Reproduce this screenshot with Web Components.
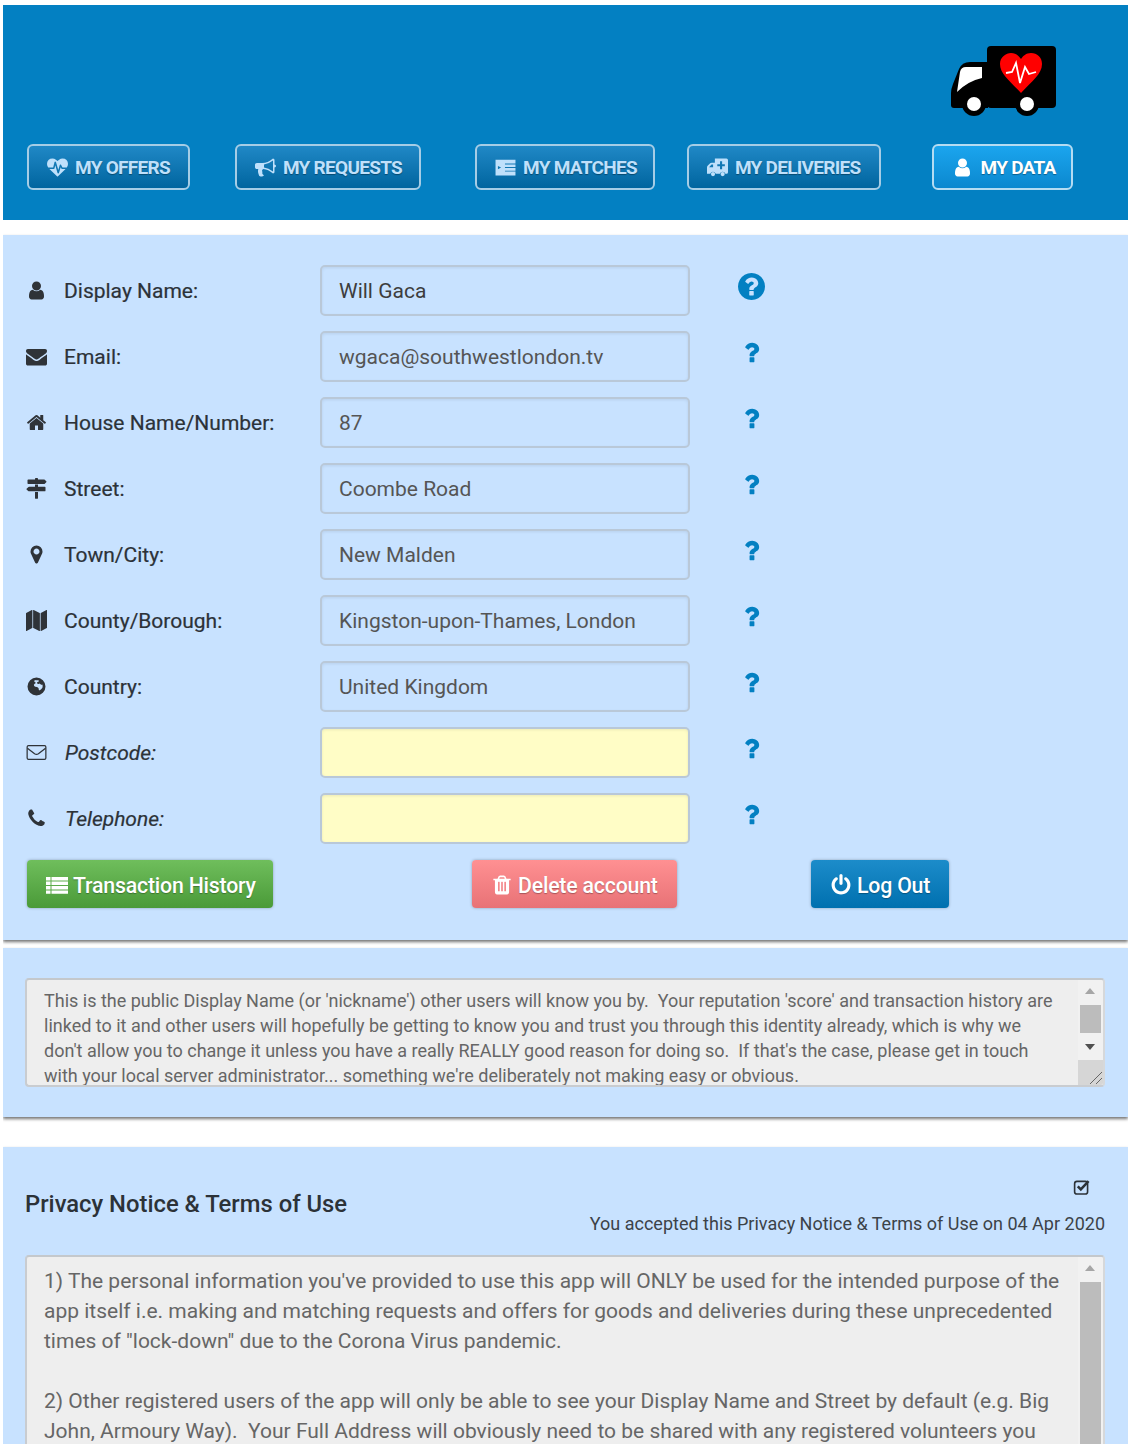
<!DOCTYPE html>
<html lang="en">
<head>
<meta charset="utf-8">
<title>My Data</title>
<style>
    html, body { height: 1444px; overflow: hidden; }
    body {
        margin: 5px 4px 0 3px;
        background: #fff;
        font-family: Roboto, "Liberation Sans", sans-serif;
        color: #2c3238;
    }
</style>
</head>
<body>

<!-- icon sprite, copied into shadow roots by app-icon -->
<template id="icon-paths">
    <svg data-name="user" viewBox="0 0 1792 1792"><path d="M1536 1399q0 109-62.5 187t-150.5 78h-854q-88 0-150.5-78t-62.5-187q0-85 8.5-160.5t31.5-152 58.5-131 94-89 134.5-34.5q131 128 313 128t313-128q76 0 134.5 34.5t94 89 58.5 131 31.5 152 8.5 160.5zm-256-887q0 159-112.5 271.5t-271.5 112.5-271.5-112.5-112.5-271.5 112.5-271.5 271.5-112.5 271.5 112.5 112.5 271.5z"/></svg>
    <svg data-name="envelope" viewBox="0 0 1792 1792"><path d="M1792 710v794q0 66-47 113t-113 47h-1472q-66 0-113-47t-47-113v-794q44 49 101 87 362 246 497 345 57 42 92.5 65.5t94.5 48 110 24.5h2q51 0 110-24.5t94.5-48 92.5-65.5q170-123 498-345 57-39 100-87zm0-294q0 79-49 151t-122 123q-376 261-468 325-10 7-42.5 30.5t-54 38-52 32.5-57.5 27-50 9h-2q-23 0-50-9t-57.5-27-52-32.5-54-38-42.5-30.5q-91-64-262-182.5t-205-142.5q-62-42-117-115.5t-55-136.5q0-78 41.5-130t118.5-52h1472q65 0 112.5 47t47.5 113z"/></svg>
    <svg data-name="home" viewBox="0 0 1792 1792"><path d="M1472 992v480q0 26-19 45t-45 19h-384v-384h-256v384h-384q-26 0-45-19t-19-45v-480q0-1 .5-3t.5-3l575-474 575 474q1 2 1 6zm223-69l-62 74q-8 9-21 11h-3q-13 0-21-7l-692-577-692 577q-12 8-24 7-13-2-21-11l-62-74q-8-10-7-23.5t11-21.5l719-599q32-26 76-26t76 26l244 204v-195q0-14 9-23t23-9h192q14 0 23 9t9 23v408l219 182q10 8 11 21.5t-7 23.5z"/></svg>
    <svg data-name="signs" viewBox="0 0 1792 1792"><path d="M1745 297q10 10 10 23t-10 23l-141 141q-28 28-68 28h-1344q-26 0-45-19t-19-45v-256q0-26 19-45t45-19h576v-64q0-26 19-45t45-19h128q26 0 45 19t19 45v64h512q40 0 68 28zm-977 907h256v512q0 26-19 45t-45 19h-128q-26 0-45-19t-19-45v-512zm832-448q26 0 45 19t19 45v256q0 26-19 45t-45 19h-1344q-40 0-68-28l-141-141q-10-10-10-23t10-23l141-141q28-28 68-28h512v-192h256v192h576z"/></svg>
    <svg data-name="marker" viewBox="-384 0 1792 1792"><path d="M768 640q0-106-75-181t-181-75-181 75-75 181 75 181 181 75 181-75 75-181zm256 0q0 109-33 179l-364 774q-16 33-47.5 52t-67.5 19-67.5-19-46.5-52l-365-774q-33-70-33-179 0-212 150-362t362-150 362 150 150 362z"/></svg>
    <svg data-name="map" viewBox="0 0 1792 1792"><path d="M512 0q13 0 22.5 9.5t9.5 22.5v1472q0 20-17 28l-480 256q-7 4-15 4-13 0-22.5-9.5t-9.5-22.5v-1472q0-20 17-28l480-256q7-4 15-4zm1248 0q13 0 22.5 9.5t9.5 22.5v1472q0 20-17 28l-480 256q-7 4-15 4-13 0-22.5-9.5t-9.5-22.5v-1472q0-20 17-28l480-256q7-4 15-4zm-1120 0q8 0 14 3l512 256q18 10 18 29v1472q0 13-9.5 22.5t-22.5 9.5q-8 0-14-3l-512-256q-18-10-18-29v-1472q0-13 9.5-22.5t22.5-9.5z"/></svg>
    <svg data-name="globe" viewBox="0 0 1792 1792"><path fill-rule="evenodd" d="M896 128a768 768 0 1 0 0 1536a768 768 0 1 0 0-1536zM760 340q120 40 240 20q90-10 120 60q-60 90-170 110q-30 80 40 140q90 20 130-40q100 30 170 110q60 20 110-10q50 130 0 280q-80 130-190 190q-80 40-120-30q20-110-70-180q-100-80-230-70q-120-70-120-180q60-100 170-140q-40-80-130-120q-10-90 50-140z"/></svg>
    <svg data-name="phone" viewBox="0 0 1792 1792"><path d="M1600 1240q0 27-10 70.5t-21 68.5q-21 50-122 106-94 51-186 51-27 0-53-3.5t-57.5-12.5-47-14.5-55.5-20.5-49-18q-98-35-175-83-127-79-264-216t-216-264q-48-77-83-175-3-9-18-49t-20.5-55.5-14.5-47-12.5-57.5-3.5-53q0-92 51-186 56-101 106-122 25-11 68.5-21t70.5-10q14 0 21 3 18 6 53 76 11 19 30 54t35 63.5 31 53.5q3 4 17.5 25t21.5 35.5 7 28.5q0 20-28.5 50t-62 55-62 53-28.5 46q0 9 5 22.5t8.5 20.5 14 24 11.5 19q76 137 174 235t235 174q2 1 19 11.5t24 14 20.5 8.5 22.5 5q18 0 46-28.5t53-62 55-62 50-28.5q14 0 28.5 7t35.5 21.5 25 17.5q25 15 53.5 31t63.5 35 54 30q70 35 76 53 3 7 3 21z"/></svg>
    <svg data-name="envelope-o" viewBox="0 0 22 22"><rect x="1.200" y="3.800" width="19.600" height="14.400" rx="1.400" fill="none" stroke="currentColor" stroke-width="1.300"/><path d="M1.500 6.500L9 12.200q2 1.400 4 0L20.500 6.500" fill="none" stroke="currentColor" stroke-width="1.300"/></svg>
    <svg data-name="question" viewBox="0 0 1792 1792"><path d="M1088 1256v240q0 16-12 28t-28 12h-240q-16 0-28-12t-12-28v-240q0-16 12-28t28-12h240q16 0 28 12t12 28zm316-600q0 54-15.5 101t-35 76.5-55 59.5-57.5 43.5-61 35.5q-41 23-68.5 65t-27.5 67q0 17-12 32.5t-28 15.5h-240q-15 0-25.5-18.5t-10.5-37.5v-45q0-83 65-156.5t143-108.5q59-27 84-56t25-76q0-42-46.5-74t-107.5-32q-65 0-108 29-35 25-107 115-13 16-31 16-12 0-25-8l-164-125q-13-10-15.5-25t5.5-28q160-266 464-266 80 0 161 31t146 83 106 127.5 41 158.5z"/></svg>
    <svg data-name="question-circle" viewBox="128 128 1536 1536"><path d="M1024 1376v-192q0-14-9-23t-23-9h-192q-14 0-23 9t-9 23v192q0 14 9 23t23 9h192q14 0 23-9t9-23zm256-672q0-88-55.5-163t-138.5-116-170-41q-243 0-371 213-15 24 8 42l132 100q7 6 19 6 16 0 25-12 53-68 86-92 34-24 86-24 48 0 85.5 26t37.5 59q0 38-20 61t-68 45q-63 28-115.5 86.5t-52.5 125.5v36q0 14 9 23t23 9h192q14 0 23-9t9-23q0-19 21.5-49.5t54.5-49.5q32-18 49-28.5t46-35 44.5-48 28-60.5 12.5-81zm384 192q0 209-103 385.5t-279.5 279.5-385.5 103-385.5-103-279.5-279.5-103-385.5 103-385.5 279.5-279.5 385.5-103 385.5 103 279.5 279.5 103 385.5z"/></svg>
    <svg data-name="power" viewBox="0 0 1792 1792"><path d="M1664 896q0 156-61 298t-164 245-245 164-298 61-298-61-245-164-164-245-61-298q0-182 80.5-343t226.5-270q43-32 95.5-25t83.5 50q32 42 24.5 94.5t-49.5 84.5q-98 74-151.5 181t-53.5 228q0 104 40.5 198.5t109.5 163.5 163.5 109.5 198.5 40.5 198.5-40.5 163.5-109.5 109.5-163.5 40.5-198.5q0-121-53.5-228t-151.5-181q-42-32-49.5-84.5t24.5-94.5q31-43 84-50t95 25q146 109 226.5 270t80.5 343zm-640-768v640q0 52-38 90t-90 38-90-38-38-90v-640q0-52 38-90t90-38 90 38 38 90z"/></svg>
    <svg data-name="trash" viewBox="0 0 1792 1792"><path d="M704 1376v-704q0-14-9-23t-23-9h-64q-14 0-23 9t-9 23v704q0 14 9 23t23 9h64q14 0 23-9t9-23zm256 0v-704q0-14-9-23t-23-9h-64q-14 0-23 9t-9 23v704q0 14 9 23t23 9h64q14 0 23-9t9-23zm256 0v-704q0-14-9-23t-23-9h-64q-14 0-23 9t-9 23v704q0 14 9 23t23 9h64q14 0 23-9t9-23zm-544-992h448l-48-117q-7-9-17-11h-317q-10 2-17 11zm928 32v64q0 14-9 23t-23 9h-96v948q0 83-47 143.5t-113 60.5h-832q-66 0-113-58.5t-47-141.5v-952h-96q-14 0-23-9t-9-23v-64q0-14 9-23t23-9h309l70-167q15-37 54-63t79-26h320q40 0 79 26t54 63l70 167h309q14 0 23 9t9 23z"/></svg>
    <svg data-name="bullhorn" viewBox="0 0 1792 1792"><path d="M1664 640q53 0 90.5 37.5t37.5 90.5-37.5 90.5-90.5 37.5v384q0 52-38 90t-90 38q-417-347-812-380-58 19-91 66t-31 100.5 40 92.5q-20 33-23 65.5t6 58 33.5 55 48 50 61.5 50.5q-29 58-111.5 83t-168.5 11.5-132-55.5q-7-23-29.5-87.5t-32-94.5-23-89-15-101 3.5-98.5 22-110.5h-122q-66 0-113-47t-47-113v-192q0-66 47-113t113-47h480q435 0 896-384 52 0 90 38t38 90v384zm-128 604v-954q-394 302-768 343v270q377 42 768 341z"/></svg>
    <svg data-name="heartbeat" viewBox="0 0 1792 1792"><path d="M1280 1024h305q-5 6-10 10.5t-9 7.5l-3 4-623 600q-18 18-44 18t-44-18l-624-602q-5-2-21-20h369q22 0 39.5-13.5t22.5-34.5l70-281 190 667q6 20 23 33t39 13q21 0 38-13t23-33l146-485 56 112q18 35 57 35zm512-428q0 145-103 300h-369l-111-221q-8-17-25.5-27t-36.5-8q-45 5-56 46l-129 430-196-686q-6-20-23.5-33t-39.5-13-39 13.5-22 34.5l-116 464h-423q-103-155-103-300 0-220 127-344t351-124q62 0 126.5 21.5t120 58 95.5 68.5 76 68q36-36 76-68t95.5-68.5 120-58 126.5-21.5q224 0 351 124t127 344z"/></svg>
    <svg data-name="newspaper" viewBox="0 0 20 20"><path fill-rule="evenodd" d="M.5 2.500h19v15H.5zM9.500 6.200v.9h10v-.9zM9.500 9.600v.9h10v-.9zM9.500 13v.9h10V13zM2.800 8.500l3 1.600-3 1.600z"/></svg>
    <svg data-name="delivery" viewBox="0 0 20 20"><path fill-rule="evenodd" d="M7.500 1.500h11q1.500 0 1.500 1.500v11.500q0 1.500-1.500 1.500h-1a2.700 2.700 0 0 0-5.200 0H8.300a2.700 2.700 0 0 0-5.200 0H0V10q0-1 .6-1.600L3 6q.5-.6 1.500-.6h3zM12.400 4v2.800H9.800v2h2.600v2.800h2V8.800H17v-2h-2.600V4zM2 9.800h3.800V7.200H4.300z"/><circle cx="5.700" cy="16.300" r="2"/><circle cx="14.900" cy="16.300" r="2"/></svg>
    <svg data-name="list" viewBox="0 0 22 20"><path d="M0 2h4.500v3.600H0zM5.500 2H22v3.600H5.500zM0 6.600h4.500V10H0zM5.500 6.600H22V10H5.500zM0 11h4.500v3.400H0zM5.500 11H22v3.400H5.500zM0 15.400h4.500v3.400H0zM5.500 15.400H22v3.400H5.500z"/></svg>
    <svg data-name="check" viewBox="0 0 20 20"><rect x="1.800" y="3.800" width="14.400" height="14" rx="2.600" fill="none" stroke="currentColor" stroke-width="1.800"/><path d="M5.300 9.200l3.400 3.500 8.600-9.100" fill="none" stroke="currentColor" stroke-width="2.800"/></svg>
</template>

<template id="app-icon-tpl">
    <style>
        :host { display: inline-flex; width: var(--size, 20px); height: var(--size, 20px); flex: none; }
        svg { width: 100%; height: 100%; fill: currentColor; display: block; }
    </style>
</template>

<template id="nav-button-tpl">
    <style>
        :host {
            display: flex;
            box-sizing: border-box;
            height: 46px;
            align-items: center;
            gap: 7px;
            padding: 0 var(--pad-right, 17px) 0 18px;
            border: 2px solid #a5cde6;
            border-radius: 6px;
            background: linear-gradient(#2088c6, #00659f);
            color: #bfe0fb;
            font-size: 19px;
            font-weight: 700;
            letter-spacing: -.72px;
            white-space: nowrap;
            text-shadow: 0 1px 1px rgba(0,0,0,.35);
            --size: 21px;
        }
        :host([active]) {
            background: linear-gradient(#1ba5ee, #0b88cf);
            color: #fff;
            border-color: #b5dcf2;
        }
    </style>
    <slot name="icon"></slot><slot></slot>
</template>

<template id="app-header-tpl">
    <style>
        :host {
            display: block;
            height: 215px;
            box-sizing: border-box;
            padding: 40px 0 0 24px;
            background: #0380c2;
        }
        .logo { display: flex; justify-content: flex-end; padding-right: 72px; height: 72px; margin-bottom: 27px; }
        nav { display: flex; }
        ::slotted(nav-button:nth-child(2)) { margin-left: 45px; }
        ::slotted(nav-button:nth-child(3)) { margin-left: 54px; }
        ::slotted(nav-button:nth-child(4)) { margin-left: 32px; }
        ::slotted(nav-button:nth-child(5)) { margin-left: 51px; }
    </style>
    <div class="logo">
        <svg width="106" height="72" viewBox="950 45 106 72">
            <rect x="987" y="46" width="69" height="62" rx="4"/>
            <path d="M988 62H970q-8 0-11 7l-6 15q-2 5-2 9v12q0 3 3 3h34z"/>
            <path d="M982 67v11q-14 3-25 14l3-20q1-5 6-5z" fill="#fff"/>
            <circle cx="974" cy="104" r="12"/><circle cx="974" cy="104" r="7" fill="#fff"/>
            <circle cx="1027" cy="104" r="12"/><circle cx="1027" cy="104" r="7" fill="#fff"/>
            <path d="M1021 93C1010 81 1000 74 1000 64C1000 57 1006 53 1011 53C1016 53 1019 56 1021 59C1023 56 1026 53 1031 53C1037 53 1042 57 1042 64C1042 74 1032 81 1021 93z" fill="#f00"/>
            <path d="M1006 73l6-1 4-9 4 20 5-16 4 7 7-2" fill="none" stroke="#fff" stroke-width="1.800"/>
        </svg>
    </div>
    <nav><slot></slot></nav>
</template>

<template id="form-row-tpl">
    <style>
        :host {
            display: grid;
            grid-template-columns: 39px 256px 370px 48px 27px;
            align-items: center;
            height: 51px;
            margin-bottom: 15px;
            font-size: 21px;
            color: #2c3238;
            white-space: nowrap;
        }
        .label { -webkit-text-stroke: .2px currentColor; }
        :host([optional]) .label { font-style: italic; padding-left: 1px; }
        .icon { display: flex; justify-content: center; width: 23px; --size: 21px; color: #2f3338; }
        .field {
            box-sizing: border-box;
            height: 51px;
            padding: 0 17px;
            display: flex;
            align-items: center;
            border: 2px solid #b9c8d8;
            border-radius: 5px;
            box-shadow: inset 0 1px 3px rgba(0,0,0,.08);
            font-size: 21px;
            color: #555;
        }
        :host([first]) .field { color: #3d3d3d; }
        :host([optional]) .field { background: #fffdc6; }
        .help { color: #0380c2; display: flex; justify-content: center; margin-top: -9px; --size: 27px; }
    </style>
    <div class="icon"><slot name="icon"></slot></div>
    <div class="label"><slot name="label"></slot></div>
    <div class="field"><slot></slot></div>
    <div></div>
    <div class="help"><slot name="help"></slot></div>
</template>

<template id="action-row-tpl">
    <style>
        :host { display: flex; margin-top: 16px; padding-left: 2px; }
    </style>
    <slot></slot>
</template>

<template id="action-button-tpl">
    <style>
        :host {
            display: flex;
            box-sizing: border-box;
            height: 48px;
            align-items: center;
            gap: 5px;
            padding: 2px 19px 0;
            border-radius: 4px;
            color: #fff;
            font-size: 21.300px;
            font-weight: 500;
            letter-spacing: -.2px;
            white-space: nowrap;
            text-shadow: 0 1px 1px rgba(0,0,0,.3);
            box-shadow: 0 0 3px rgba(0,0,0,.3);
            background: linear-gradient(var(--top), var(--bottom));
            --size: 22px;
        }
    </style>
    <slot name="icon"></slot><slot></slot>
</template>

<template id="note-box-tpl">
    <style>
        :host {
            display: block;
            position: relative;
            box-sizing: border-box;
            background: #eee;
            border: 2px solid #c9ccd0;
            border-right-color: #d6d8da;
            border-top-color: #c4c8cc;
            border-radius: 4px;
            overflow: hidden;
            color: #666;
        }
        .text { white-space: pre-wrap; padding: var(--pad-top, 0) 42px 0 17px; }
        /* fake scrollbar sits over the text area */
        .bar {
            position: absolute;
            top: 0; right: 0; bottom: 0;
            width: 25px;
            background: #f1f1f1;
        }
        .up, .down { position: absolute; left: 7px; width: 0; height: 0; border: 5.500px solid transparent; }
        .up { top: 3px; border-bottom: 6px solid #a6a6a6; }
        .down { top: 64px; border-top: 6px solid #505050; }
        .thumb { position: absolute; left: 2px; right: 2px; top: 25px; height: 28px; background: #bcbcbc; }
        .grip {
            position: absolute; right: 0; bottom: 0; width: 25px; height: 25px;
            background: #d6d6d6;
        }
        :host([long]) .thumb { height: 400px; }
        :host([long]) .down, :host([long]) .grip { display: none; }
    </style>
    <div class="text"><slot></slot></div>
    <div class="bar">
        <div class="up"></div><div class="thumb"></div><div class="down"></div>
        <div class="grip">
            <svg width="25" height="25" viewBox="0 0 25 25"><path d="M12 24L24 12M18 24l6-6" stroke="#666" stroke-width="1" fill="none"/></svg>
        </div>
    </div>
</template>

<template id="app-panel-tpl">
    <style>
        :host {
            display: block;
            background: #c8e2ff;
            box-shadow: 0 2px 3px rgba(0,0,0,.55);
        }
    </style>
    <slot></slot>
</template>

<template id="privacy-head-tpl">
    <style>
        :host {
            display: flex;
            justify-content: space-between;
            align-items: flex-end;
            height: 108px;
            box-sizing: border-box;
            padding: 0 0 21px;
        }
        .title { font-size: 23.800px; font-weight: 500; color: #2c3238; padding-bottom: 16px; }
        .right { text-align: right; font-size: 18px; color: #3c4248; }
        .tick { display: block; margin: 0 14px 17px auto; width: 18px; height: 18px; color: #2c3238; --size: 18px; }
    </style>
    <div class="title"><slot name="title"></slot></div>
    <div class="right">
        <div class="tick"><slot name="icon"></slot></div>
        <slot></slot>
    </div>
</template>

<app-header>
    <nav-button style="--pad-right:18px"><app-icon slot="icon" name="heartbeat"></app-icon>MY OFFERS</nav-button>
    <nav-button><app-icon slot="icon" name="bullhorn"></app-icon>MY REQUESTS</nav-button>
    <nav-button style="--pad-right:16px"><app-icon slot="icon" name="newspaper"></app-icon>MY MATCHES</nav-button>
    <nav-button style="--pad-right:19px"><app-icon slot="icon" name="delivery"></app-icon>MY DELIVERIES</nav-button>
    <nav-button active style="--pad-right:15px"><app-icon slot="icon" name="user"></app-icon>MY DATA</nav-button>
</app-header>

<app-panel style="margin-top:15px;height:705px;box-sizing:border-box;padding:30px 0 0 22px">
    <form-row first><app-icon slot="icon" name="user"></app-icon><span slot="label">Display Name:</span>Will Gaca<app-icon slot="help" name="question-circle"></app-icon></form-row>
    <form-row><app-icon slot="icon" name="envelope"></app-icon><span slot="label">Email:</span>wgaca@southwestlondon.tv<app-icon slot="help" name="question"></app-icon></form-row>
    <form-row><app-icon slot="icon" name="home"></app-icon><span slot="label">House Name/Number:</span>87<app-icon slot="help" name="question"></app-icon></form-row>
    <form-row><app-icon slot="icon" name="signs"></app-icon><span slot="label">Street:</span>Coombe Road<app-icon slot="help" name="question"></app-icon></form-row>
    <form-row><app-icon slot="icon" name="marker"></app-icon><span slot="label">Town/City:</span>New Malden<app-icon slot="help" name="question"></app-icon></form-row>
    <form-row><app-icon slot="icon" name="map"></app-icon><span slot="label">County/Borough:</span>Kingston-upon-Thames, London<app-icon slot="help" name="question"></app-icon></form-row>
    <form-row><app-icon slot="icon" name="globe"></app-icon><span slot="label">Country:</span>United Kingdom<app-icon slot="help" name="question"></app-icon></form-row>
    <form-row optional><app-icon slot="icon" name="envelope-o"></app-icon><span slot="label">Postcode:</span><app-icon slot="help" name="question"></app-icon></form-row>
    <form-row optional><app-icon slot="icon" name="phone"></app-icon><span slot="label">Telephone:</span><app-icon slot="help" name="question"></app-icon></form-row>
    <action-row>
        <action-button style="--top:#6fbe5c;--bottom:#4a9a38;width:246px"><app-icon slot="icon" name="list"></app-icon>Transaction History</action-button>
        <action-button style="--top:#ff9092;--bottom:#e87276;width:205px;margin-left:199px"><app-icon slot="icon" name="trash"></app-icon>Delete account</action-button>
        <action-button style="--top:#1c8cca;--bottom:#0070af;width:138px;margin-left:134px"><app-icon slot="icon" name="power"></app-icon>Log Out</action-button>
    </action-row>
</app-panel>

<app-panel style="margin-top:8px;height:169px;box-sizing:border-box;padding:30px 23px 0 22px">
    <note-box style="height:109px;font-size:18px;line-height:25px;--pad-top:8px">This is the public Display Name (or 'nickname') other users will know you by.  Your reputation 'score' and transaction history are linked to it and other users will hopefully be getting to know you and trust you through this identity already, which is why we don't allow you to change it unless you have a really REALLY good reason for doing so.  If that's the case, please get in touch with your local server administrator... something we're deliberately not making easy or obvious.</note-box>
</app-panel>

<app-panel style="margin-top:30px;height:400px;box-sizing:border-box;padding:0 23px 0 22px">
    <privacy-head>
        <span slot="title">Privacy Notice &amp; Terms of Use</span>
        <app-icon slot="icon" name="check"></app-icon>
        You accepted this Privacy Notice &amp; Terms of Use on 04 Apr 2020
    </privacy-head>
    <note-box long style="height:300px;font-size:21px;line-height:30px;--pad-top:9px">1) The personal information you've provided to use this app will ONLY be used for the intended purpose of the app itself i.e. making and matching requests and offers for goods and deliveries during these unprecedented times of "lock-down" due to the Corona Virus pandemic.

2) Other registered users of the app will only be able to see your Display Name and Street by default (e.g. Big John, Armoury Way).  Your Full Address will obviously need to be shared with any registered volunteers you</note-box>
</app-panel>

<script>
    //Stamp a template into an open shadow root
    function stamp(host, id) {
        const root = host.attachShadow({mode: "open"});
        root.appendChild(document.getElementById(id).content.cloneNode(true));
        return root;
    }

    class AppIcon extends HTMLElement {
        constructor() {
            super();
            this.root = stamp(this, "app-icon-tpl");
        }

        connectedCallback() {
            const source = document.getElementById("icon-paths").content
                .querySelector(`svg[data-name="${this.getAttribute("name")}"]`);
            this.root.appendChild(source.cloneNode(true));
        }
    }

    //All the plain ones only need their template
    const simple = ["nav-button", "app-header", "form-row", "action-row", "action-button", "note-box", "app-panel", "privacy-head"];
    simple.forEach(name => {
        customElements.define(name, class extends HTMLElement {
            constructor() {
                super();
                stamp(this, name + "-tpl");
            }
        });
    });

    customElements.define("app-icon", AppIcon);
</script>
</body>
</html>
